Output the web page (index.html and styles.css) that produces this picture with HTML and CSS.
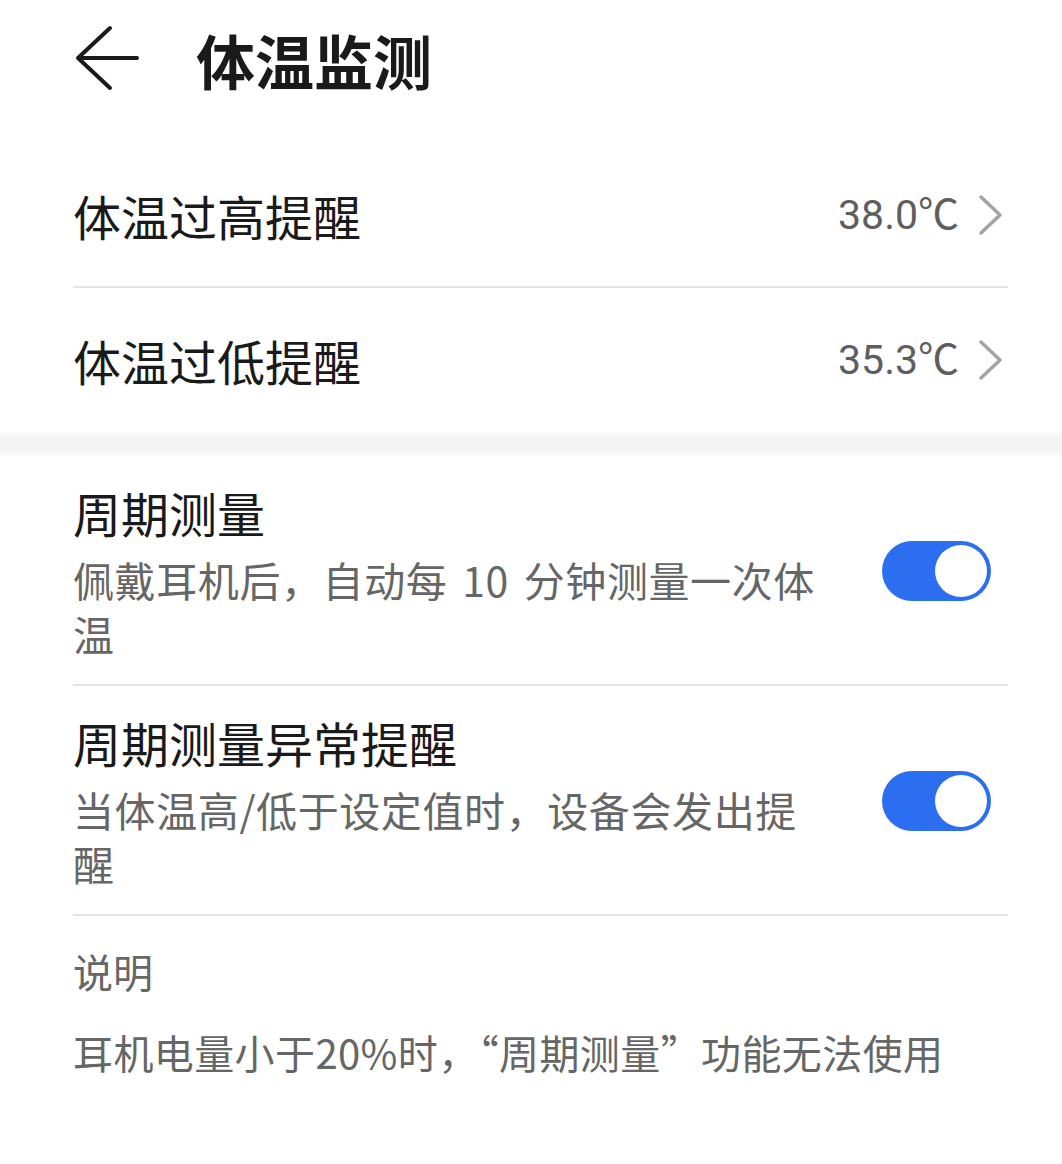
FILE: index.html
```html
<!DOCTYPE html>
<html lang="zh-CN">
<head>
<meta charset="utf-8">
<title>体温监测</title>
<link rel="stylesheet" href="styles.css">
</head>
<body>
<div class="page">
  <header class="header">
    <svg class="back" width="70" height="66" viewBox="0 0 70 66" aria-hidden="true">
      <path d="M39 3 L7 33 L39 63 M7 33 L66 33" fill="none" stroke="#1a1a1a" stroke-width="4" stroke-linecap="round" stroke-linejoin="round"/>
    </svg>
    <h1 class="title">体温监测</h1>
  </header>

  <section class="group">
    <div class="row row-border">
      <span class="label">体温过高提醒</span>
      <span class="value-wrap">
        <span class="value">38.0℃</span>
        <svg class="chev" width="28" height="44" viewBox="0 0 28 44" aria-hidden="true"><path d="M5 4 L24 22 L5 40" fill="none" stroke="#a3a3a3" stroke-width="3.5" stroke-linecap="round" stroke-linejoin="round"/></svg>
      </span>
    </div>
    <div class="row">
      <span class="label">体温过低提醒</span>
      <span class="value-wrap">
        <span class="value">35.3℃</span>
        <svg class="chev" width="28" height="44" viewBox="0 0 28 44" aria-hidden="true"><path d="M5 4 L24 22 L5 40" fill="none" stroke="#a3a3a3" stroke-width="3.5" stroke-linecap="round" stroke-linejoin="round"/></svg>
      </span>
    </div>
  </section>

  <div class="band"></div>

  <section class="group">
    <div class="trow">
      <div class="ttext">
        <div class="label tlabel">周期测量</div>
        <div class="sub">佩戴耳机后，自动每 10 分钟测量一次体温</div>
      </div>
      <span class="toggle"><span class="knob"></span></span>
    </div>
    <div class="trow">
      <div class="ttext">
        <div class="label tlabel">周期测量异常提醒</div>
        <div class="sub">当体温高/低于设定值时，设备会发出提醒</div>
      </div>
      <span class="toggle"><span class="knob"></span></span>
    </div>
    <div class="note">
      <div class="note-title">说明</div>
      <div class="note-text">耳机电量小于20%时，“周期测量”功能无法使用</div>
    </div>
  </section>
</div>
</body>
</html>
```

FILE: styles.css
```css
* { box-sizing: border-box; }

html, body {
  margin: 0;
  padding: 0;
  background: #ffffff;
}

body {
  font-family: "Noto Sans CJK SC", "Noto Sans", sans-serif;
  color: #1a1a1a;
  width: 1062px;
  height: 1164px;
  overflow: hidden;
}

.header {
  height: 144px;
  padding: 0 0 24px 71px;
  display: flex;
  align-items: center;
}

.back {
  display: block;
  flex: none;
  margin-top: -4px;
}

.title {
  margin: 0 0 0 55px;
  font-size: 59px;
  font-weight: 700;
  line-height: 70px;
  color: #1a1a1a;
}

.group {
  margin: 0 54px 0 73px;
}

.row {
  height: 144px;
  display: flex;
  align-items: center;
  justify-content: space-between;
}

.row-border {
  border-bottom: 2px solid #e3e3e3;
}

.label {
  font-size: 48px;
  line-height: 62px;
  color: #1a1a1a;
}

.value-wrap {
  display: flex;
  align-items: center;
  margin-right: 4px;
}

.value {
  font-family: Roboto, "Noto Sans CJK SC", sans-serif;
  font-size: 41px;
  line-height: 50px;
  color: #5e5e5e;
  margin-right: 17px;
}

.chev {
  display: block;
}

.band {
  height: 24px;
  background: linear-gradient(#fbfbfb, #f4f4f4 30%, #f4f4f4 70%, #fbfbfb);
}

.trow {
  display: flex;
  align-items: center;
  justify-content: space-between;
  padding: 25px 17px 24px 0;
  border-bottom: 2px solid #e3e3e3;
}

.ttext {
  width: 745px;
}

.tlabel {
  display: block;
}

.sub {
  margin-top: 9px;
  font-size: 41px;
  line-height: 54px;
  letter-spacing: 0.6px;
  word-spacing: 5px;
  color: #666666;
}

.toggle {
  flex: none;
  width: 109px;
  height: 60px;
  border-radius: 30px;
  background: #2b6ff0;
  display: flex;
  align-items: center;
  justify-content: flex-end;
  padding-right: 4px;
}

.knob {
  width: 52px;
  height: 52px;
  border-radius: 50%;
  background: #ffffff;
}

.note {
  padding: 28px 0 0 0;
  color: #666666;
}

.note-title {
  font-size: 40px;
  line-height: 54px;
}

.note-text {
  margin-top: 27px;
  font-size: 40px;
  line-height: 54px;
  letter-spacing: 0.4px;
}
```
